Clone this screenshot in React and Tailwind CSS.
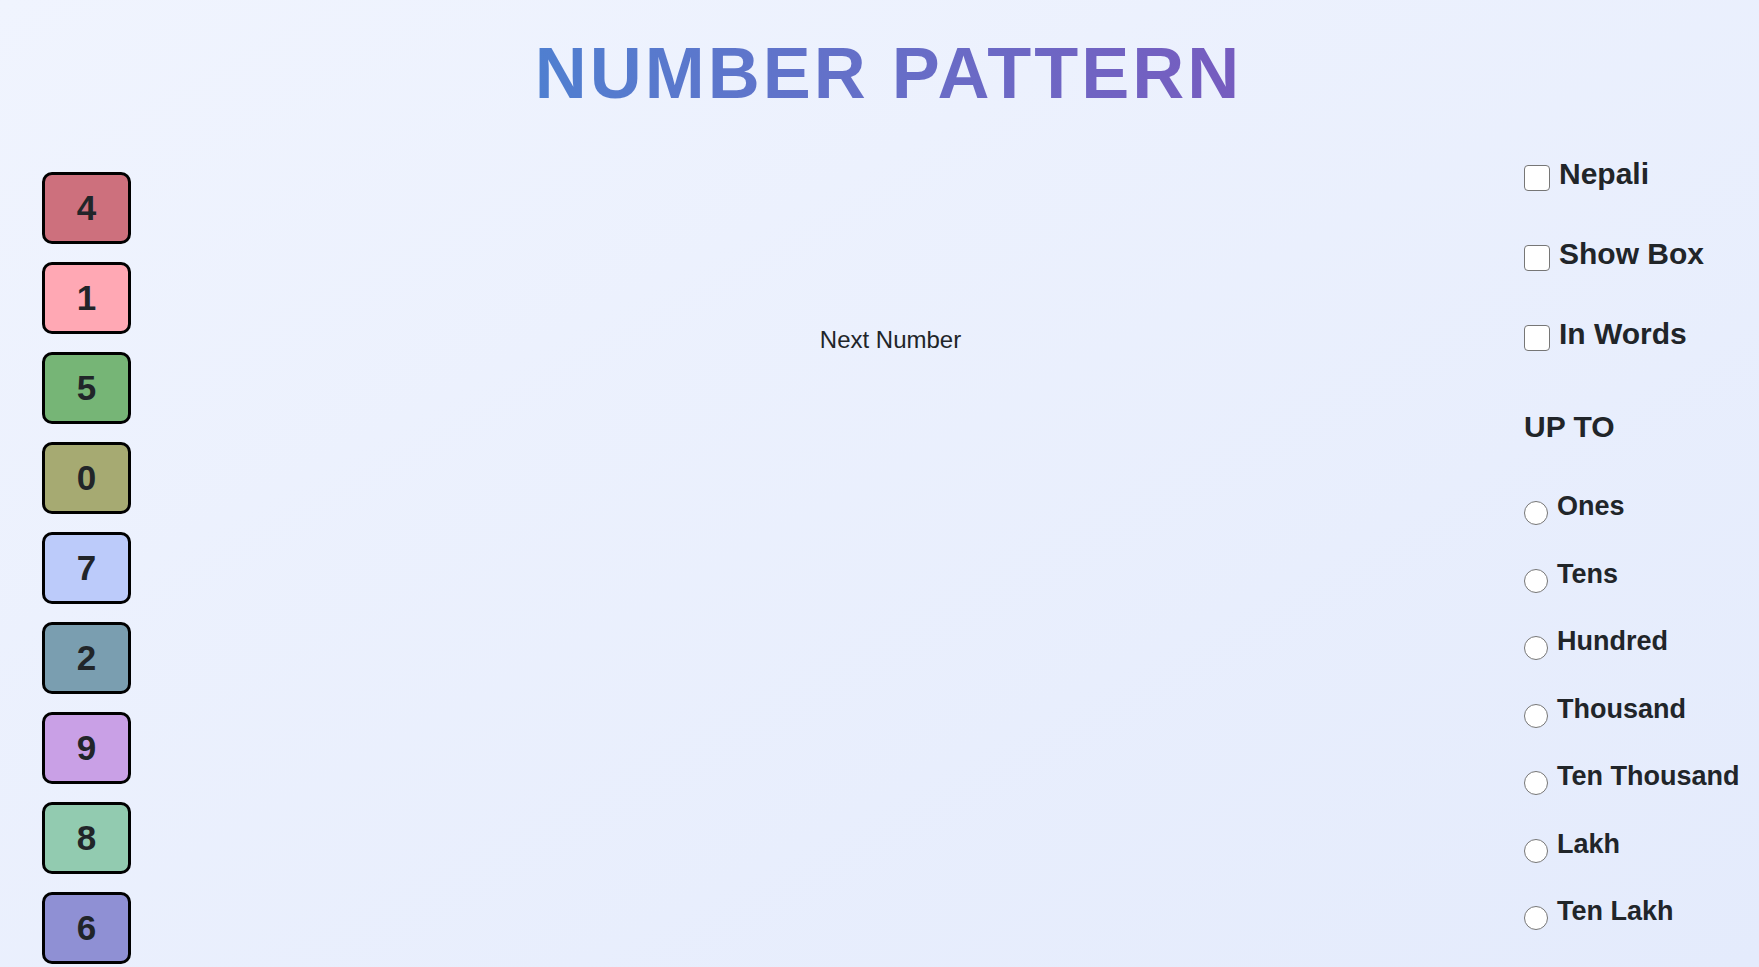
import React from "react";

const digits = [
    { n: 4, bg: "bg-[#cd707d]" },
    { n: 1, bg: "bg-[#ffa8b4]" },
    { n: 5, bg: "bg-[#76b576]" },
    { n: 0, bg: "bg-[#a6aa72]" },
    { n: 7, bg: "bg-[#bccbfa]" },
    { n: 2, bg: "bg-[#7a9eb0]" },
    { n: 9, bg: "bg-[#c9a0e6]" },
    { n: 8, bg: "bg-[#92cbb0]" },
    { n: 6, bg: "bg-[#8f90d4]" },
];

const options = ["Nepali", "Show Box", "In Words"];
const places = ["Ones", "Tens", "Hundred", "Thousand", "Ten Thousand", "Lakh", "Ten Lakh"];

const App = () => {
    return (
        <div className="h-screen overflow-hidden bg-gradient-to-br from-[#f0f4fe] to-[#e4ebfc] font-['Liberation_Sans',Arial,sans-serif] text-[#212529]">
            <h1 className="pt-[37px] pl-[18px] text-center leading-none">
                <span className="inline-block text-[72px] font-bold tracking-[3px] leading-none bg-gradient-to-r from-[#4f7fd0] to-[#765cbf] bg-clip-text text-transparent">
                    NUMBER PATTERN
                </span>
            </h1>

            <div className="flex">
                {/* digit tiles */}
                <div className="flex flex-col gap-[18px] pl-[42px] pt-[63px]">
                    {digits.map((d) => (
                        <div
                            key={d.n}
                            className={`w-[89px] h-[72px] shrink-0 rounded-[10px] border-[3px] border-black flex items-center justify-center text-[35px] font-bold ${d.bg}`}
                        >
                            {d.n}
                        </div>
                    ))}
                </div>

                {/* center */}
                <div className="flex-1 pt-[213px] pl-[126px] text-center text-[24px] leading-[36px]">
                    Next Number
                </div>

                {/* settings */}
                <div className="w-[235px] pt-[42px] font-bold">
                    <div className="flex flex-col gap-[35px]">
                        {options.map((o) => (
                            <label key={o} className="flex items-start h-[45px] text-[30px] leading-[45px]">
                                <input
                                    type="checkbox"
                                    className="appearance-none mt-[14px] mr-[9px] w-[26px] h-[26px] shrink-0 rounded-[4px] border-[1.5px] border-[#767676] bg-white"
                                />
                                {o}
                            </label>
                        ))}
                    </div>

                    <h2 className="mt-[48px] text-[30px] leading-[45px]">UP TO</h2>

                    <div className="mt-[37px] flex flex-col gap-[27.5px]">
                        {places.map((p) => (
                            <label key={p} className="flex items-start text-[27px] leading-[40px] whitespace-nowrap">
                                <input
                                    type="radio"
                                    name="upto"
                                    className="appearance-none mt-[15px] mr-[9px] w-[24px] h-[24px] shrink-0 rounded-full border-[1.5px] border-[#767676] bg-white"
                                />
                                {p}
                            </label>
                        ))}
                    </div>
                </div>
            </div>
        </div>
    );
};

export default App;
